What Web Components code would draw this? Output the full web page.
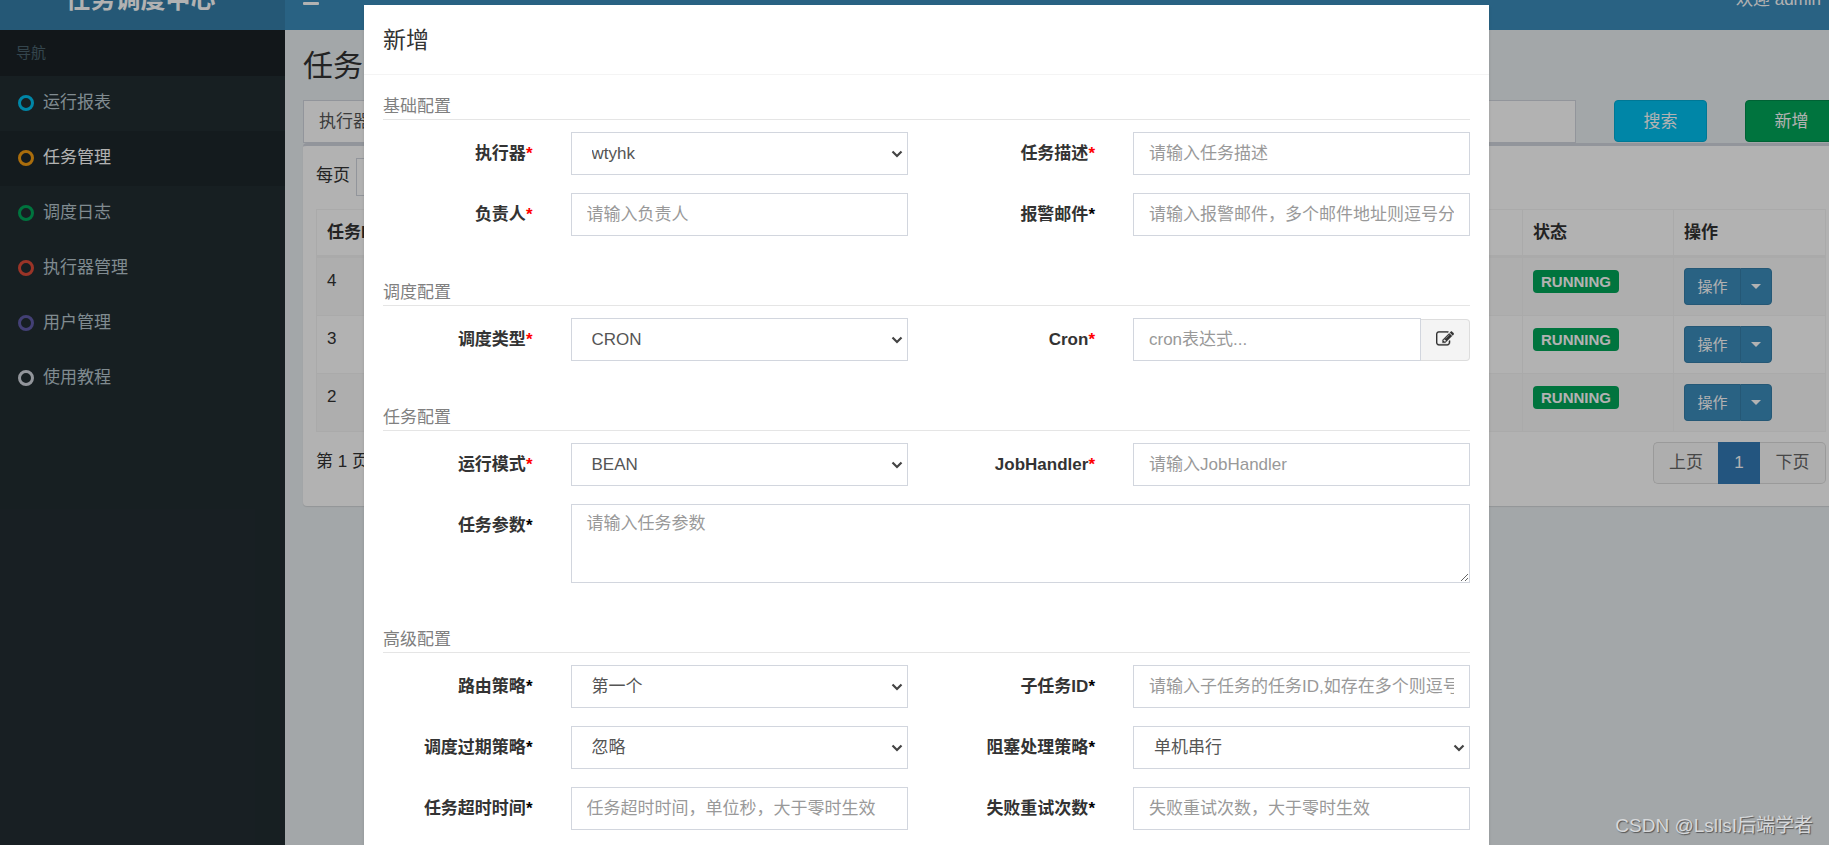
<!DOCTYPE html>
<html lang="zh-CN">
<head>
<meta charset="utf-8">
<title>任务调度中心</title>
<style>
  html, body { margin: 0; height: 100%; }
  body {
    font: 17px/25px "Liberation Sans", "Noto Sans CJK SC", sans-serif;
    color: #333;
    background: #eaeff2;
  }
</style>
</head>
<body>
<job-app></job-app>

<script>
const define = (name, html, setup) => {
  const tpl = document.createElement('template');
  tpl.innerHTML = `<style>*,*::before,*::after{box-sizing:border-box}:host{display:block;box-sizing:border-box}</style>${html}`;
  customElements.define(name, class extends HTMLElement {
    constructor() {
      super();
      this.attachShadow({ mode: 'open' }).append(tpl.content.cloneNode(true));
    }
    connectedCallback() { if (setup) setup(this, this.shadowRoot); }
  });
};

/* Top bar, scrolled so that only its lower part shows */
define('top-bar', `
<style>
  :host { display: flex; align-items: flex-end; height: 30px; overflow: hidden; background: #3c8dbc; color: #fff; }
  .logo { width: 285px; height: 62px; background: #367fa9; color: #fff; font-size: 25px; font-weight: bold; line-height: 62px; text-align: center; text-decoration: none; padding-right: 4px; }
  .nav { flex: 1; height: 62px; display: flex; align-items: center; justify-content: space-between; padding: 0 32px 0 18px; }
  button { border: 0; padding: 0; background: none; color: inherit; display: flex; }
  a { color: #fff; text-decoration: none; }
</style>
<a class="logo" href="#">任务调度中心</a>
<div class="nav">
  <button type="button" aria-label="切换导航"><svg width="16" height="14" viewBox="0 0 16 14" fill="currentColor"><rect y="0" width="16" height="3" rx="1"/><rect y="5" width="16" height="3" rx="1"/><rect y="10" width="16" height="3" rx="1"/></svg></button>
  <a href="#">欢迎 admin</a>
</div>`);

define('nav-item', `
<style>
  a { display: flex; align-items: center; gap: 9px; height: 55px; padding: 0 18px 2px; color: #b8c7ce; text-decoration: none; }
  i { width: 16px; height: 16px; border: 3px solid var(--dot); border-radius: 50%; }
  :host([active]) a { background: #1e282c; color: #fff; }
</style>
<a href="#"><i></i><span><slot></slot></span></a>`);

define('side-bar', `
<style>
  :host { width: 285px; flex: none; background: #222d32; }
  h2 { margin: 0; height: 46px; padding: 0 16px; background: #1a2226; color: #4b646f; font-size: 15px; font-weight: normal; line-height: 46px; }
</style>
<h2>导航</h2>
<nav>
  <nav-item style="--dot:#00c0ef">运行报表</nav-item>
  <nav-item style="--dot:#f39c12" active>任务管理</nav-item>
  <nav-item style="--dot:#00a65a">调度日志</nav-item>
  <nav-item style="--dot:#dd4b39">执行器管理</nav-item>
  <nav-item style="--dot:#605ca8">用户管理</nav-item>
  <nav-item style="--dot:#d2d6de">使用教程</nav-item>
</nav>`);

define('filter-bar', `
<style>
  :host { display: flex; align-items: flex-start; gap: 38px; }
  .group { flex: 1; display: flex; height: 43px; }
  label { border: 1px solid #d2d6de; border-right: 0; background: #fff; color: #555; padding: 8px 15px; line-height: 25px; }
  input { flex: 1; min-width: 0; border: 1px solid #d2d6de; background: #fff; font: inherit; padding: 0 15px; }
  button { width: 93px; height: 42px; border: 1px solid; border-radius: 4px; color: #fff; font: inherit; }
  .info { background: #00c0ef; border-color: #00acd6; }
  .success { background: #00a65a; border-color: #008d4c; }
</style>
<div class="group"><label for="group">执行器</label><input id="group" type="text"></div>
<button class="info" type="button">搜索</button>
<button class="success" type="button">新增</button>`);

define('row-actions', `
<style>
  :host { display: flex; }
  button { height: 37px; border: 1px solid #367fa9; background: #3c8dbc; color: #fff; font: inherit; font-size: 15px; padding: 0; }
  .main { width: 56px; border-radius: 4px 0 0 4px; border-right: 0; }
  .more { width: 32px; border-radius: 0 4px 4px 0; display: flex; align-items: center; justify-content: center; }
</style>
<button class="main" type="button">操作</button><button class="more" type="button" aria-label="更多"><svg width="10" height="5" viewBox="0 0 10 5"><path d="M0 0h10L5 5z" fill="#fff"/></svg></button>`);

define('job-table', `
<style>
  :host { background: #fff; border-top: 3px solid #d2d6de; border-radius: 4px; box-shadow: 0 1px 1px rgba(0,0,0,.1); padding: 12px 12px 22px 13px; }
  .length { display: flex; align-items: center; gap: 6px; height: 38px; margin-bottom: 13px; }
  .length label { padding-bottom: 4px; }
  select { height: 38px; width: 90px; padding-left: 12px; border: 1px solid #d2d6de; background: #fff; font: inherit; color: inherit; }
  table { width: 100%; border-collapse: separate; border-spacing: 0; table-layout: fixed; border: 1px solid #f4f4f4; border-width: 1px 0 0 1px; }
  th, td { text-align: left; vertical-align: top; padding: 10px; border: 1px solid #f4f4f4; border-width: 0 1px 1px 0; }
  th { height: 48px; border-bottom-width: 3px; }
  td { height: 58px; }
  tbody tr:nth-child(odd) { background: #f9f9f9; }
  .state { width: 151px; } .ops { width: 152px; }
  .badge { display: block; width: 86px; height: 23px; margin-top: 2px; border-radius: 4px; background: #00a65a; color: #fff; font-size: 15px; line-height: 23px; font-weight: bold; text-align: center; }
  footer { display: flex; justify-content: space-between; align-items: flex-start; margin-top: 10px; height: 42px; line-height: 40px; }
  .pages { display: flex; height: 42px; }
  .pages a { border: 1px solid #ddd; color: #666; background: #fafafa; text-decoration: none; line-height: 40px; width: 66px; text-align: center; }
  .pages a:first-child { width: 65px; border-radius: 5px 0 0 5px; border-right: 0; }
  .pages a:last-child { border-radius: 0 5px 5px 0; border-left: 0; }
  .pages .on { width: 42px; background: #337ab7; border-color: #337ab7; color: #fff; }
</style>
<div class="length"><label for="len">每页</label><select id="len"><option>10</option></select></div>
<table>
  <thead><tr><th>任务ID</th><th class="state">状态</th><th class="ops">操作</th></tr></thead>
  <tbody>
    <tr><td>4</td><td><span class="badge">RUNNING</span></td><td><row-actions></row-actions></td></tr>
    <tr><td>3</td><td><span class="badge">RUNNING</span></td><td><row-actions></row-actions></td></tr>
    <tr><td>2</td><td><span class="badge">RUNNING</span></td><td><row-actions></row-actions></td></tr>
  </tbody>
</table>
<footer><span>第 1 页</span><div class="pages"><a href="#">上页</a><a class="on" href="#">1</a><a href="#">下页</a></div></footer>`);

/* One labelled control: kind is input, select, textarea or cron */
define('form-field', `
<style>
  :host { display: contents; }
  label { padding: 9px 19px 0; text-align: right; font-weight: bold; line-height: 25px; }
  label span { color: #000; }
  :host([required]) label span { color: #f00; }
  .cell { padding: 0 19px; display: flex; }
  :host([kind=textarea]) .cell { grid-column: span 3; }
  input, select, textarea { display: block; flex: 1; width: 100%; min-width: 0; height: 43px; margin: 0; border: 1px solid #d2d6de; border-radius: 0; background-color: #fff; color: #555; font: inherit; line-height: 25px; padding: 7px 15px; }
  textarea { height: 79px; resize: vertical; padding-top: 6px; }
  select { appearance: none; padding: 7px 20px;
    background-image: url("data:image/svg+xml,%3Csvg xmlns='http://www.w3.org/2000/svg' width='12' height='8'%3E%3Cpath d='M1.500 1.500L6 6l4.500-4.500' fill='none' stroke='%23444' stroke-width='2.200'/%3E%3C/svg%3E");
    background-repeat: no-repeat; background-position: right 4px center; }
  ::placeholder { color: #999; opacity: 1; }
  button { width: 49px; height: 42px; margin-top: 1px; border: 1px solid #ddd; border-left: 0; border-radius: 0 4px 4px 0; background: #f4f4f4; color: #333; padding: 0 0 3px; display: flex; align-items: center; justify-content: center; }
</style>
<label for="c"><slot></slot><span>*</span></label>
<div class="cell"></div>`, (host, root) => {
  const cell = root.querySelector('.cell');
  if (cell.firstChild) return;
  const kind = host.getAttribute('kind') || 'input';
  const c = document.createElement(kind === 'cron' ? 'input' : kind);
  c.id = 'c';
  if (kind === 'select') c.add(new Option(host.getAttribute('value')));
  else c.placeholder = host.getAttribute('hint');
  cell.append(c);
  if (kind === 'cron') {
    const b = document.createElement('button');
    b.type = 'button';
    b.setAttribute('aria-label', '编辑');
    b.innerHTML = '<svg width="18" height="16" viewBox="0 0 1792 1536" fill="currentColor" stroke="currentColor" stroke-width="24"><path d="M888 1056l116-116-152-152-116 116v56h96v96h56zm440-720q-16-16-33 1L945 687q-17 17-1 33t33-1l350-350q17-17 1-33zm80 594v190q0 119-84.500 203.500T1120 1408H288q-119 0-203.500-84.500T0 1120V288Q0 169 84.500 84.500T288 0h832q63 0 117 25 15 7 18 23 3 17-9 29l-49 49q-14 14-32 8-23-6-45-6H288q-66 0-113 47t-47 113v832q0 66 47 113t113 47h832q66 0 113-47t47-113V994q0-13 9-22l64-64q15-15 35-7t20 29zm-96-738l288 288-672 672H640V864zm444 132l-92 92-288-288 92-92q28-28 68-28t68 28l152 152q28 28 28 68t-28 68z"/></svg>';
    cell.append(b);
  }
});

define('form-section', `
<style>
  :host { margin-bottom: 26px; }
  h3 { margin: 0 19px 12px; border-bottom: 1px solid #e5e5e5; color: #808080; font-size: 17px; font-weight: normal; line-height: 25px; }
  .grid { display: grid; grid-template-columns: 1fr 2fr 1fr 2fr; row-gap: 18px; padding-bottom: 18px; }
</style>
<h3></h3>
<div class="grid"><slot></slot></div>`, (host, root) => { root.querySelector('h3').textContent = host.getAttribute('heading'); });

define('job-dialog', `
<style>
  :host { width: 1125px; margin: 5px auto 0; background: #fff; box-shadow: 0 2px 3px rgba(0,0,0,.125); }
  header { height: 70px; border-bottom: 1px solid #f4f4f4; padding: 0 19px; margin-bottom: 19px; }
  h2 { margin: 0; font-size: 23px; font-weight: normal; line-height: 70px; }
</style>
<header><h2>新增</h2></header>
<form>
  <form-section heading="基础配置">
    <form-field kind="select" value="wtyhk" required>执行器</form-field>
    <form-field hint="请输入任务描述" required>任务描述</form-field>
    <form-field hint="请输入负责人" required>负责人</form-field>
    <form-field hint="请输入报警邮件，多个邮件地址则逗号分隔">报警邮件</form-field>
  </form-section>
  <form-section heading="调度配置">
    <form-field kind="select" value="CRON" required>调度类型</form-field>
    <form-field kind="cron" hint="cron表达式..." required>Cron</form-field>
  </form-section>
  <form-section heading="任务配置">
    <form-field kind="select" value="BEAN" required>运行模式</form-field>
    <form-field hint="请输入JobHandler" required>JobHandler</form-field>
    <form-field kind="textarea" hint="请输入任务参数">任务参数</form-field>
  </form-section>
  <form-section heading="高级配置">
    <form-field kind="select" value="第一个">路由策略</form-field>
    <form-field hint="请输入子任务的任务ID,如存在多个则逗号分隔">子任务ID</form-field>
    <form-field kind="select" value="忽略">调度过期策略</form-field>
    <form-field kind="select" value="单机串行">阻塞处理策略</form-field>
    <form-field hint="任务超时时间，单位秒，大于零时生效">任务超时时间</form-field>
    <form-field hint="失败重试次数，大于零时生效">失败重试次数</form-field>
  </form-section>
</form>`);

/* The shell is a little wider than the window and clipped on the right */
define('job-app', `
<style>
  :host { position: relative; height: 100vh; overflow: hidden; }
  .shell { width: calc(100% + 24px); height: 100%; display: flex; flex-direction: column; }
  .body { flex: 1; display: flex; min-height: 0; }
  main { flex: 1; min-width: 0; padding: 16px 15px 0 18px; }
  h1 { margin: 0 0 14px; font-size: 30px; line-height: 40px; font-weight: normal; }
  .mask { position: absolute; inset: 0 -24px 0 0; background: rgba(0,0,0,.3); overflow: hidden; display: flex; align-items: flex-start; }
  .mark { position: absolute; right: 16px; bottom: 6px; font-size: 19px; line-height: 26px; color: #d6d8da; text-shadow: 1px 1px 1px #555; }
</style>
<div class="shell">
  <top-bar></top-bar>
  <div class="body">
    <side-bar></side-bar>
    <main>
      <h1>任务管理</h1>
      <filter-bar></filter-bar>
      <job-table></job-table>
    </main>
  </div>
</div>
<div class="mask"><job-dialog></job-dialog></div>
<div class="mark">CSDN @LsllsI后端学者</div>`);
</script>
</body>
</html>
